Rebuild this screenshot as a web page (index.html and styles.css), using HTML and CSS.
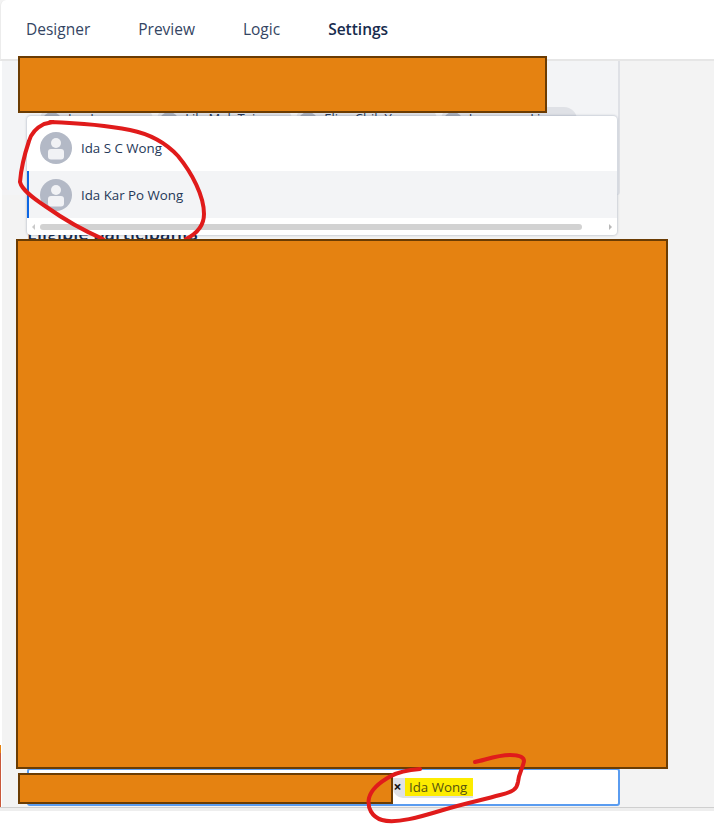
FILE: index.html
```html
<!DOCTYPE html>
<html lang="en">
<head>
<meta charset="utf-8">
<title>Form settings</title>
<link rel="stylesheet" href="styles.css">
</head>
<body>
<div class="app">
  <header class="topbar">
    <nav class="tabs">
      <a class="tab">Designer</a>
      <a class="tab">Preview</a>
      <a class="tab">Logic</a>
      <a class="tab tab-active">Settings</a>
    </nav>
  </header>
  <div class="body-row">
    <div class="rail"><span class="rail-mark"></span></div>
    <main class="content">
      <section class="card">
        <div class="chips">
          <span class="chip"><span class="chip-avatar"></span>Ian Lam</span>
          <span class="chip"><span class="chip-avatar"></span>Lily Mak Tai</span>
          <span class="chip"><span class="chip-avatar"></span>Elisa Chik Yu</span>
          <span class="chip"><span class="chip-avatar"></span>Lawrence Li</span>
        </div>
      </section>
      <div class="dropdown">
        <div class="option">
          <svg class="avatar" viewBox="0 0 32 32"><circle cx="16" cy="16" r="16" fill="#b3b9c6"/><circle cx="16" cy="11" r="5" fill="#f1f2f5"/><rect x="8" y="17" width="16" height="10.500" rx="3" fill="#f1f2f5"/></svg>
          <span>Ida S C Wong</span>
        </div>
        <div class="option option-active">
          <svg class="avatar" viewBox="0 0 32 32"><circle cx="16" cy="16" r="16" fill="#b3b9c6"/><circle cx="16" cy="11" r="5" fill="#f1f2f5"/><rect x="8" y="17" width="16" height="10.500" rx="3" fill="#f1f2f5"/></svg>
          <span>Ida Kar Po Wong</span>
        </div>
        <div class="hscroll">
          <span class="arrow arrow-left"></span>
          <span class="thumb"></span>
          <span class="arrow arrow-right"></span>
        </div>
      </div>
      <h2 class="section-title">Eligible participants</h2>
      <div class="picker">
        <span class="picked"><span class="picked-x">×</span><mark class="picked-name">Ida Wong</mark></span>
      </div>
    </main>
  </div>
</div>
<div class="footer-strip"></div>

<svg class="ink" viewBox="0 0 714 825" aria-hidden="true">
  <path d="M53 122 L44 124 C36 128 31 134 29 141 C25 153 21 168 20 182 C22 190 33 198 45 206 C62 218 82 230 103 239 M186 239 C198 233 204 225 204 214 C204 196 192 173 178 156 C166 143 150 134 130 130 C105 125 78 123 50 122" />
</svg>
<div class="redact redact-top"></div>
<div class="redact redact-main"></div>
<div class="redact redact-bottom"></div>
<svg class="ink" viewBox="0 0 714 825" aria-hidden="true">
  <path d="M420 769 C408 770 398 772 391 776 C380 782 371 790 369 798 C367 808 372 817 382 820 C396 824 420 817 443 810 C462 804 482 800 500 795 C513 792 517 789 518 782 C519 772 523 768 524 761 C524 757 520 755 510 755 C497 755 485 760 475 762" />
</svg>
</body>
</html>
```
FILE: styles.css
```css
* { box-sizing: border-box; }
html, body { margin: 0; height: 825px; overflow: hidden; }
body {
  position: relative;
  background: #fff;
  font-family: "Open Sans", "Liberation Sans", sans-serif;
  color: #172b4d;
}
.app {
  height: 808px;
  display: flex;
  flex-direction: column;
  background: #f3f3f3;
  border-bottom: 1px solid #cfcfcf;
}
.topbar {
  height: 61px;
  flex: none;
  background: #fff;
  border-bottom: 2px solid #e6e6e6;
  border-left: 1px solid #ececec;
  border-top-left-radius: 6px;
}
.tabs {
  display: flex;
  gap: 48px;
  padding: 18px 0 0 25px;
  font-size: 15.500px;
  line-height: 22px;
  color: #344563;
}
.tab-active { font-weight: 600; color: #172b4d; }
.body-row { flex: 1; display: flex; min-height: 0; }
.rail {
  width: 2px;
  flex: none;
  display: flex;
  flex-direction: column;
  justify-content: flex-end;
  background: #fff;
}
.rail-mark {
  display: block;
  width: 1px;
  height: 62px;
  background: linear-gradient(#e58211 0 8px, #c9583a 8px);
}
.content {
  position: relative;
  flex: 1;
  display: flex;
  flex-direction: column;
  min-width: 0;
}
.card {
  width: 618px;
  height: 134px;
  background: #f3f4f6;
  border-right: 2px solid #dfe1e6;
  border-bottom-right-radius: 3px;
  padding: 46px 0 0 38px;
}
.chips { display: flex; gap: 4px; }
.chip {
  display: flex;
  align-items: flex-start;
  gap: 6px;
  height: 26px;
  padding: 1px 37px 0 2px;
  border-radius: 13px;
  background: #dfe1e6;
  font-size: 13px;
  line-height: 20px;
  color: #253858;
  white-space: nowrap;
}
.chip-avatar {
  width: 20px;
  height: 20px;
  margin-top: 4px;
  border-radius: 50%;
  background: #a9afbc;
}
.dropdown {
  position: absolute;
  left: 25px;
  top: 55px;
  width: 590px;
  height: 119px;
  padding-top: 8px;
  background: #fff;
  border-radius: 4px;
  box-shadow: 0 0 2px 1px rgba(9, 30, 66, 0.16);
  z-index: 2;
}
.option {
  height: 47px;
  display: flex;
  align-items: center;
  gap: 9px;
  padding-left: 13px;
  font-size: 13.300px;
  color: #253858;
}
.option-active {
  background: #f3f4f6;
  box-shadow: inset 2px 0 0 #0c66e4;
}
.avatar { width: 32px; height: 32px; flex: none; }
.hscroll {
  display: flex;
  align-items: center;
  gap: 5px;
  height: 16px;
  margin-top: 1px;
  padding: 0 5px;
}
.arrow { width: 0; height: 0; border-style: solid; border-width: 3px 0; border-color: transparent; }
.arrow-left { border-right: 3px solid #c9c9c9; }
.arrow-right { border-left: 3px solid #b8b8b8; margin-left: 22px; }
.thumb {
  width: 542px;
  height: 6px;
  flex: none;
  border-radius: 3px;
  background: #d2d2d2;
}
.section-title {
  margin: 27px 0 0 25px;
  font-size: 18px;
  line-height: 23px;
  font-weight: 600;
  color: #172b4d;
}
.picker {
  margin: auto 0 1px 25px;
  width: 593px;
  height: 38px;
  display: flex;
  align-items: center;
  padding-left: 364px;
  background: #fff;
  border: 2px solid #5a9cf0;
  border-radius: 3px;
}
.picked {
  display: flex;
  align-items: flex-start;
  height: 20px;
  margin-top: 1px;
  border-radius: 0 0 0 10px;
  background: #dfe1e6;
}
.picked-x {
  width: 9px;
  margin-right: 3px;
  text-align: center;
  font-size: 14px;
  font-weight: 700;
  line-height: 18px;
  color: #111;
}
.picked-name {
  padding: 0 6px 0 4px;
  font-size: 13.300px;
  line-height: 18px;
  background: #fdec00;
  color: #55530f;
}
.footer-strip { height: 3px; background: #eeeeee; }
.redact {
  position: absolute;
  background: #e58211;
  border: 2px solid #6b3c03;
  z-index: 3;
}
.redact-top { left: 18px; top: 56px; width: 529px; height: 57px; }
.redact-main { left: 16px; top: 239px; width: 652px; height: 530px; }
.redact-bottom { left: 18px; top: 773px; width: 375px; height: 31px; }
.ink {
  position: absolute;
  left: 0;
  top: 0;
  width: 714px;
  height: 825px;
  fill: none;
  stroke: #e01b1b;
  stroke-width: 4;
  stroke-linecap: round;
  stroke-linejoin: round;
  pointer-events: none;
  z-index: 3;
}
```
